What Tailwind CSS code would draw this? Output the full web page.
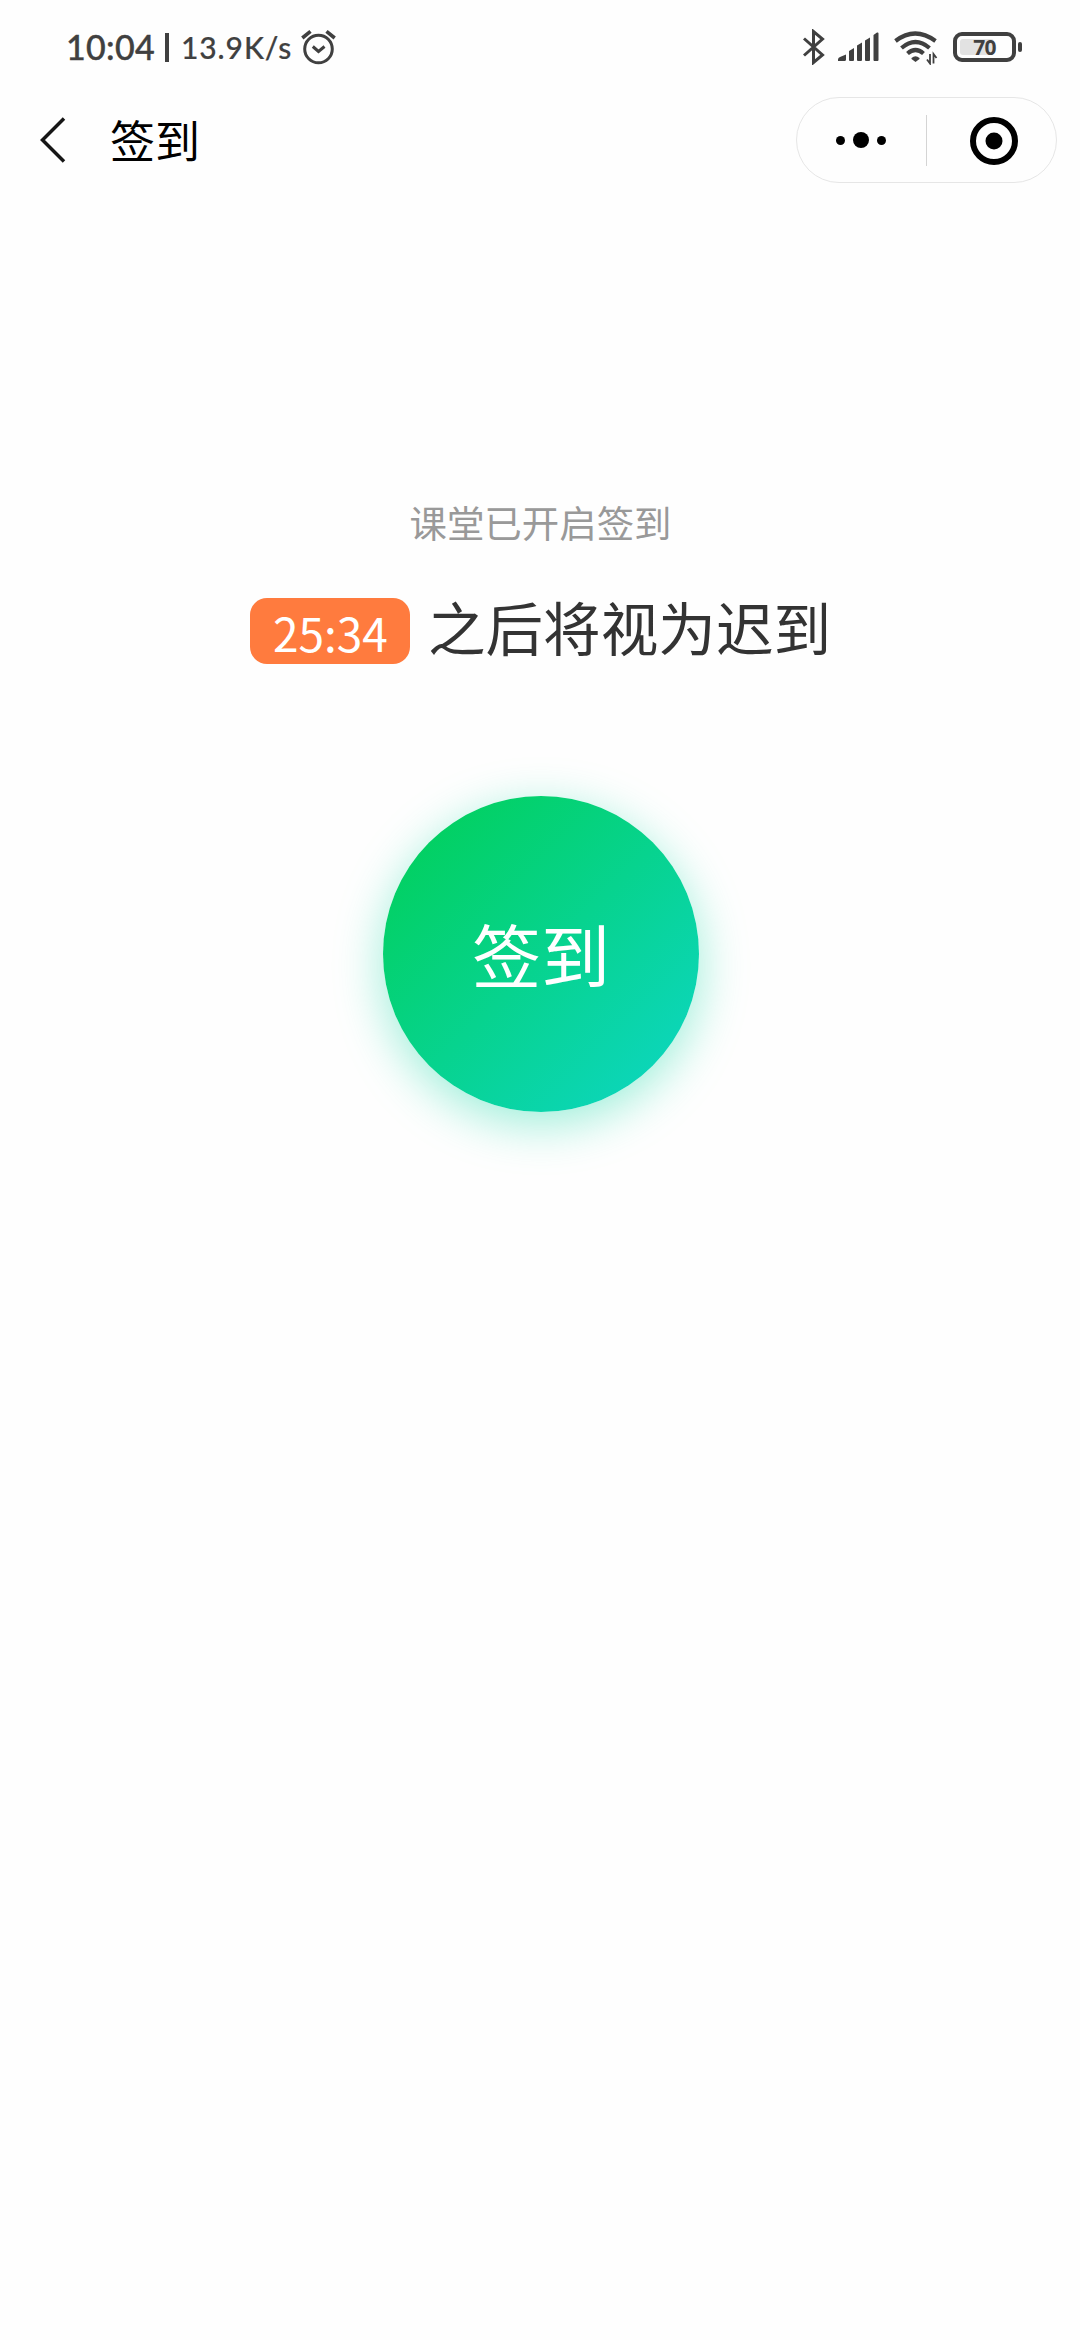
<!DOCTYPE html>
<html lang="zh-CN">
<head>
<meta charset="utf-8">
<title>签到</title>
<script src="https://cdn.jsdelivr.net/npm/@tailwindcss/browser@4"></script>
</head>
<body class="bg-white font-['Noto_Sans_CJK_SC',sans-serif]">
<div class="w-[1080px] h-[2340px] overflow-hidden bg-[#fefefe] flex flex-col">
  <header class="h-[94px] shrink-0 flex items-center justify-between pl-[66px] pr-[58px] text-[#404040] font-['Lato',sans-serif] font-medium">
    <div class="flex items-center h-full pt-[2px]">
      <span class="w-[99px] text-[34px] leading-[40px] whitespace-nowrap [-webkit-text-stroke:0.4px_#404040] tracking-[0.3px] mt-[-2px]">10:04</span>
      <span class="w-1 h-[29px] bg-[#404040] mt-[-1px]"></span>
      <span class="w-[132px] pl-[12px] text-[30px] leading-[40px] tracking-[0.9px] whitespace-nowrap [-webkit-text-stroke:0.2px_#404040] mt-[-2px]">13.9K/s</span>
      <svg class="w-[38px] h-[38px] mt-[-3px]" viewBox="0 0 38 38" fill="none" stroke="#404040" stroke-width="3"><circle cx="17.500" cy="21" r="13.800"/><path d="M1.300 10 9.500 3.300M25.500 3.300l8.200 6.700" stroke-width="3.600"/><path d="m11.800 18.500 5.700 5 6-5"/></svg>
    </div>
    <div class="flex items-center h-full">
      <svg class="w-[22px] h-[36px]" viewBox="0 0 22 36" fill="none" stroke="#404040" stroke-width="3"><path d="m1 9.500 18.500 16.500-9 7.500V2.500l9 7.500L1 26.500"/></svg>
      <svg class="w-[42px] h-[30px] ml-[13px]" viewBox="0 0 42 30" fill="#404040"><path d="M0 29v-1.500q0-2 2-2.500l6-2.500v5q0 1.500-1.500 1.500ZM11 19l5-3v12q0 1-1 1h-3q-1 0-1-1ZM19 13.500l5-3V28q0 1-1 1h-3q-1 0-1-1ZM27 8.500l5-3V28q0 1-1 1h-3q-1 0-1-1ZM35.500 3l3.500-2.500q1.500-.5 1.500 1V28q0 1-1 1h-3q-1 0-1-1Z"/></svg>
      <svg class="w-[44px] h-[34px] ml-[14px] mt-[2px]" viewBox="0 0 44 34" fill="none" stroke="#404040" stroke-width="4.200"><path d="M1.500 10q19.500-15 40 0M7.500 17q14-12 28 0M13.500 22.500q8-7 16 0"/><path d="M17.500 27q4-3.500 8 0v1l-4 3-4-3Z" fill="#404040" stroke="none"/><path d="M36 23v9.500l-3-4M39.500 32.500V23l3 4" stroke-width="1.800"/></svg>
      <div class="ml-[15px] mt-[-1px] w-[63px] h-[30px] rounded-[9px] border-4 border-[#404040] p-[3px] relative flex items-center justify-center">
        <span class="absolute left-[3px] top-[3px] w-[34px] h-4 rounded-[3px] bg-[#e2e2e2]"></span>
        <span class="relative font-['Open_Sans',sans-serif] font-bold text-[21px] leading-5 tracking-[-0.800px]">70</span>
      </div>
      <span class="w-1 h-[10px] rounded-sm bg-[#404040] ml-[2px]"></span>
    </div>
  </header>
  <nav class="h-[92px] shrink-0 flex items-center pl-[38px] pr-[23px] text-black">
    <svg class="w-[30px] h-[48px]" viewBox="0 0 30 48" fill="none" stroke="#161616" stroke-width="3.500"><path d="M26 2.500 4.500 24 26 45.500"/></svg>
    <h1 class="ml-[42px] text-[45px] leading-[60px] font-normal">签到</h1>
    <div class="ml-auto w-[261px] h-[86px] rounded-full border border-[#e6e6e6] flex items-center">
      <div class="w-[129px] h-full flex items-center justify-center gap-[8px] pr-[2px]">
        <span class="size-[9px] rounded-full bg-black"></span><span class="size-4 rounded-full bg-black"></span><span class="size-[9px] rounded-full bg-black"></span>
      </div>
      <span class="w-px h-[51px] bg-[#d4d4d4]"></span>
      <svg class="w-12 h-12 ml-[43px] mt-[2px]" viewBox="0 0 48 48"><circle cx="24" cy="24" r="21" fill="none" stroke="#000" stroke-width="6"/><circle cx="24" cy="24" r="8.500"/></svg>
    </div>
  </nav>
  <main class="flex flex-col items-center pt-[306px] pl-[1px]">
    <p class="text-[37.440px] leading-[60px] text-[#999]">课堂已开启签到</p>
    <div class="mt-[36px] h-[84px] flex items-start">
      <span class="w-[160px] h-[66px] mt-[10px] rounded-[17px] bg-[#ff7b3e] text-white flex items-center justify-center text-[46px] leading-[66px] pt-[2px] pl-[1px]">25:34</span>
      <span class="ml-[18px] mt-[-4px] text-[57.600px] leading-[84px] text-[#333]">之后将视为迟到</span>
    </div>
    <button class="mt-[124px] size-[316px] rounded-full bg-linear-[135deg,#02d061_12%,#0cd6bc_90%] shadow-[0_12px_48px_rgba(8,214,160,0.4)] text-white text-[69px] leading-[90px] pb-[2px] pl-[1px]">签到</button>
  </main>
</div>
</body>
</html>
